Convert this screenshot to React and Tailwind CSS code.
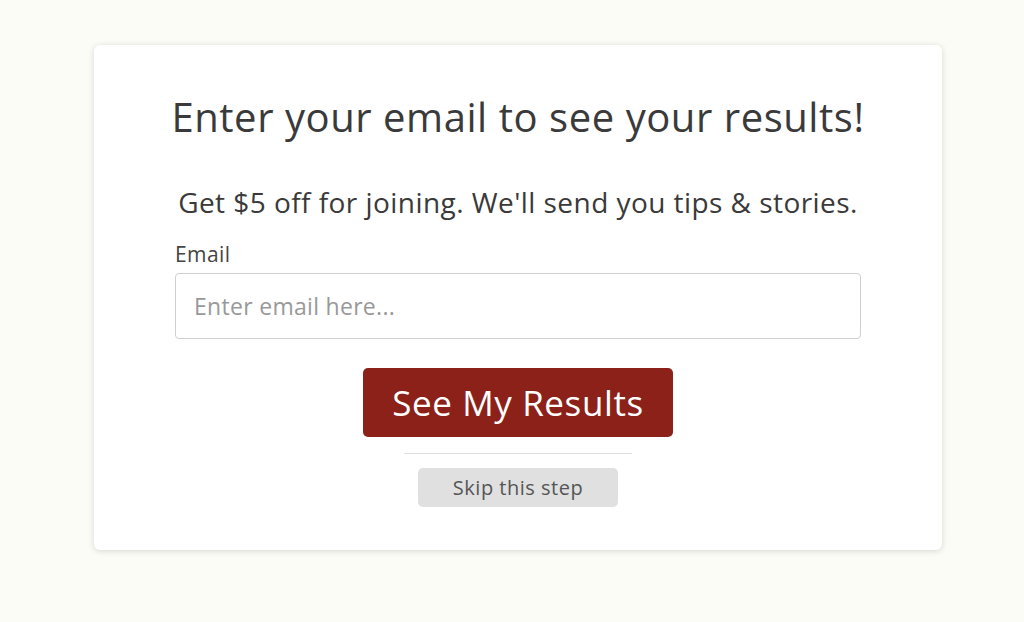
export default function App() {
  return (
    <div className="min-h-[622px] w-full bg-[#fcfcf7] pt-[45px]" style={{ fontFamily: '"Open Sans", sans-serif' }}>
      <div className="ml-[94px] w-[848px] h-[505px] rounded-[6px] bg-white shadow-[0_1px_6px_rgba(0,0,0,0.15)] flex flex-col items-center pt-[46px]">
        <h1 className="text-[40px] leading-[52px] tracking-[0.55px] text-[#3a3a3a] font-normal">Enter your email to see your results!</h1>
        <p className="mt-[42px] text-[28px] leading-[34px] tracking-[0.45px] text-[#3a3a3a]">Get $5 off for joining. We'll send you tips &amp; stories.</p>
        <div className="w-[686px] mt-[21px]">
          <label className="block text-[21px] leading-[28px] tracking-[0.4px] text-[#444]">Email</label>
          <input
            type="text"
            placeholder="Enter email here..."
            className="mt-[5px] block w-full h-[66px] rounded-[4px] border border-[#d0d0d0] px-[18px] text-[23px] tracking-[0.3px] text-[#333] placeholder:text-[#999] outline-none"
          />
        </div>
        <button className="mt-[29px] w-[310px] h-[69px] rounded-[5px] bg-[#8c211a] text-white text-[35px] leading-[40px] tracking-[0.6px]">See My Results</button>
        <div className="mt-[16px] w-[228px] h-px bg-[#e0e0e0]" />
        <button className="mt-[14px] w-[200px] h-[39px] rounded-[5px] bg-[#e0e0e0] text-[#555] text-[20px] tracking-[0.5px]">Skip this step</button>
      </div>
    </div>
  );
}
